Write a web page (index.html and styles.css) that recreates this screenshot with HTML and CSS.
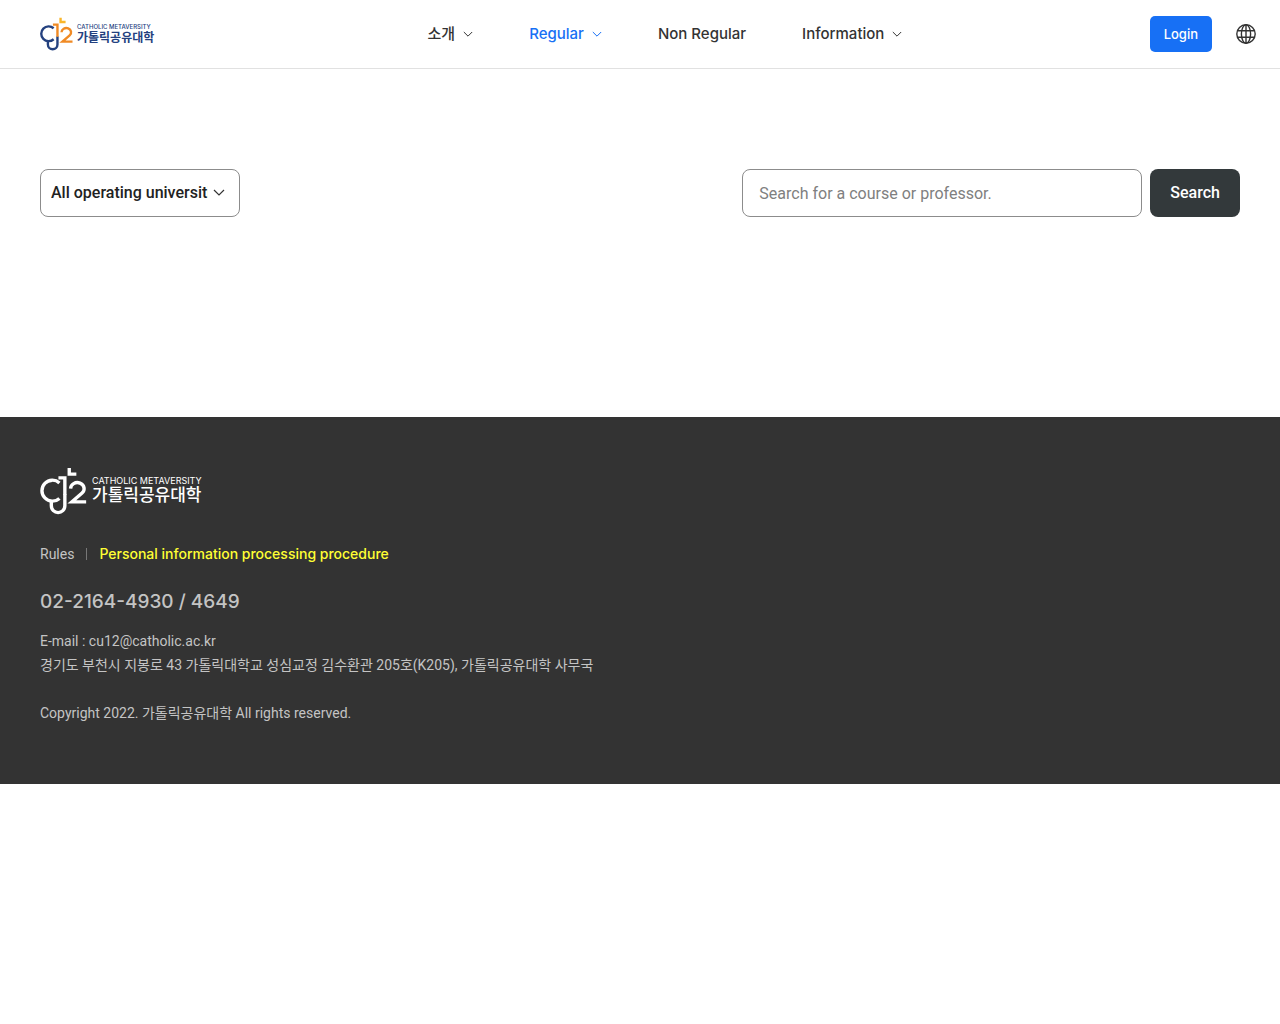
FILE: index.html
```
<!DOCTYPE html>
<html lang="ko">
<head>
    <meta charset="utf-8">
    <meta name="viewport" content="width=device-width, initial-scale=1">
    <title>가톨릭공유대학</title>
    <link rel="stylesheet" href="styles.css">
</head>

<body>

    <header class="header">
        <a class="logo" href="#">
            <svg class="logo-mark" viewBox="32 38 138 142" aria-hidden="true">
                <path class="mark-main" d="M89 85A31 31 0 1 0 89 131"/>
                <path class="mark-main" d="M65 138v15a20 20 0 0 0 40 0V118"/>
                <path class="mark-accent" d="M86 70h19v50"/>
                <path class="mark-light" d="M118 41v18h21"/>
                <path class="mark-accent" d="M122 102a20 18 0 1 1 34 13L126 141h42"/>
            </svg>
            <span class="logo-text">
                <span class="logo-en">CATHOLIC METAVERSITY</span>
                <span class="logo-ko">가톨릭공유대학</span>
            </span>
        </a>
        <nav class="nav">
            <a href="#">소개 <svg class="arrow" viewBox="0 0 12 8"><path d="M1 1l5 5 5-5"/></svg></a>
            <a class="active" href="#">Regular <svg class="arrow" viewBox="0 0 12 8"><path d="M1 1l5 5 5-5"/></svg></a>
            <a href="#">Non Regular</a>
            <a href="#">Information <svg class="arrow" viewBox="0 0 12 8"><path d="M1 1l5 5 5-5"/></svg></a>
        </nav>
        <div class="util">
            <button class="login" type="button">Login</button>
            <button class="lang" type="button" aria-label="Language">
                <svg viewBox="0 0 20 22">
                    <circle cx="10" cy="11" r="9.2"/>
                    <ellipse cx="10" cy="11" rx="4.6" ry="9.2"/>
                    <path d="M10 1.8v18.4M1.5 7.7h17M1.5 14.3h17"/>
                </svg>
            </button>
        </div>
    </header>

    <main class="content">
        <form class="filter">
            <div class="select-box">
                <select aria-label="University">
                    <option>All operating universities</option>
                </select>
                <svg class="arrow" viewBox="0 0 12 8"><path d="M1 1l5 5 5-5"/></svg>
            </div>
            <div class="search">
                <input type="text" aria-label="Search" placeholder="Search for a course or professor.">
                <button type="button">Search</button>
            </div>
        </form>
    </main>

    <footer class="footer">
        <a class="logo logo-white" href="#">
            <svg class="logo-mark" viewBox="32 38 138 142" aria-hidden="true">
                <path class="mark-main" d="M89 85A31 31 0 1 0 89 131"/>
                <path class="mark-main" d="M65 138v15a20 20 0 0 0 40 0V118"/>
                <path class="mark-accent" d="M86 70h19v50"/>
                <path class="mark-light" d="M118 41v18h21"/>
                <path class="mark-accent" d="M122 102a20 18 0 1 1 34 13L126 141h42"/>
            </svg>
            <span class="logo-text">
                <span class="logo-en">CATHOLIC METAVERSITY</span>
                <span class="logo-ko">가톨릭공유대학</span>
            </span>
        </a>
        <div class="policy">
            <a href="#">Rules</a>
            <a class="privacy" href="#">Personal information processing procedure</a>
        </div>
        <p class="tel">02-2164-4930 / 4649</p>
        <p>E-mail : cu12@catholic.ac.kr</p>
        <p>경기도 부천시 지봉로 43 가톨릭대학교 성심교정 김수환관 205호(K205), 가톨릭공유대학 사무국</p>
        <p class="copy">Copyright 2022. 가톨릭공유대학 All rights reserved.</p>
    </footer>

</body>

</html>
```

FILE: styles.css
```
* {
    box-sizing: border-box;
}

body {
    margin: 0;
    background: #fff;
    color: #333;
    font-family: Roboto, "Noto Sans CJK KR", sans-serif;
    font-size: 16px;
    line-height: 24px;
}

a {
    color: inherit;
    text-decoration: none;
}

p {
    margin: 0;
}

button,
input,
select {
    font: inherit;
}

svg {
    display: block;
    fill: none;
}

/* header */
.header {
    display: flex;
    align-items: center;
    padding: 16px 24px 16px 40px;
    border-bottom: 1px solid #e1e1e1;
}

.logo {
    display: flex;
    align-items: center;
    gap: 4px;
    color: #24417f;
}

.logo-mark {
    width: 33px;
    height: 34px;
    stroke-width: 10;
}

.mark-main {
    stroke: #24417f;
}

.mark-accent {
    stroke: #f08a24;
}

.mark-light {
    stroke: #f9b62b;
}

.logo-text {
    display: flex;
    flex-direction: column;
    white-space: nowrap;
}

.logo-en {
    font-family: Inter, sans-serif;
    font-size: 6px;
    font-weight: 500;
    line-height: 8px;
}

.logo-ko {
    font-size: 12px;
    font-weight: 700;
    line-height: 14px;
}

.nav {
    flex: 1;
    display: flex;
    justify-content: center;
    gap: 56px;
    padding-left: 26px;
    font-family: Inter, "Noto Sans CJK KR", sans-serif;
    font-size: 15px;
    font-weight: 500;
}

.nav a {
    display: flex;
    align-items: center;
    gap: 8px;
}

.nav .active {
    color: #1770f5;
}

.arrow {
    width: 10px;
    height: 7px;
    stroke: currentColor;
    stroke-width: 1.2;
}

.util {
    display: flex;
    align-items: center;
    gap: 24px;
}

.login {
    padding: 6px 14px;
    border: 0;
    border-radius: 5px;
    background: #1770f5;
    color: #fff;
    font-family: Inter, sans-serif;
    font-size: 13px;
    font-weight: 500;
}

.lang {
    padding: 0;
    border: 0;
    background: none;
    color: #333;
}

.lang svg {
    width: 20px;
    height: 22px;
    stroke: currentColor;
    stroke-width: 1.4;
}

/* filter */
.content {
    padding: 100px 40px 200px;
}

.filter {
    display: flex;
    justify-content: space-between;
}

.select-box {
    position: relative;
    width: 200px;
}

.select-box select {
    width: 100%;
    height: 48px;
    padding: 0 31px 0 10px;
    border: 1px solid #8c8c8c;
    border-radius: 8px;
    background: #fff;
    color: #222;
    font-weight: 500;
    appearance: none;
}

.select-box .arrow {
    position: absolute;
    top: 20px;
    right: 15px;
    width: 12px;
    height: 8px;
    pointer-events: none;
}

.search {
    display: flex;
    gap: 8px;
}

.search input {
    width: 400px;
    height: 48px;
    padding: 0 16px;
    border: 1px solid #8c8c8c;
    border-radius: 8px;
}

.search input::placeholder {
    color: #808080;
}

.search button {
    padding: 0 20px;
    border: 0;
    border-radius: 8px;
    background: #33393b;
    color: #fff;
    font-weight: 500;
}

/* footer */
.footer {
    padding: 50px 40px 59px;
    background: #333;
    color: #c4c4c4;
    font-size: 14px;
}

.logo-white {
    gap: 5px;
    color: #fff;
}

.logo-white .logo-mark {
    width: 47px;
    height: 48px;
}

.logo-white path {
    stroke: #fff;
}

.logo-white .logo-en {
    font-size: 9px;
    font-weight: 400;
    line-height: 8px;
}

.logo-white .logo-ko {
    font-size: 17px;
    font-weight: 500;
    line-height: 20px;
}

.policy {
    display: flex;
    align-items: center;
    margin-top: 27px;
}

.privacy {
    display: flex;
    align-items: center;
    color: #ff3;
    font-family: Inter, sans-serif;
    font-weight: 500;
}

.privacy::before {
    content: "";
    height: 12px;
    margin: 0 12px;
    border-left: 1px solid #777;
}

.tel {
    margin: 20px 0 11px;
    font-family: Inter, sans-serif;
    font-size: 19px;
    font-weight: 500;
    line-height: 32px;
}

.copy {
    margin-top: 24px;
}
```
